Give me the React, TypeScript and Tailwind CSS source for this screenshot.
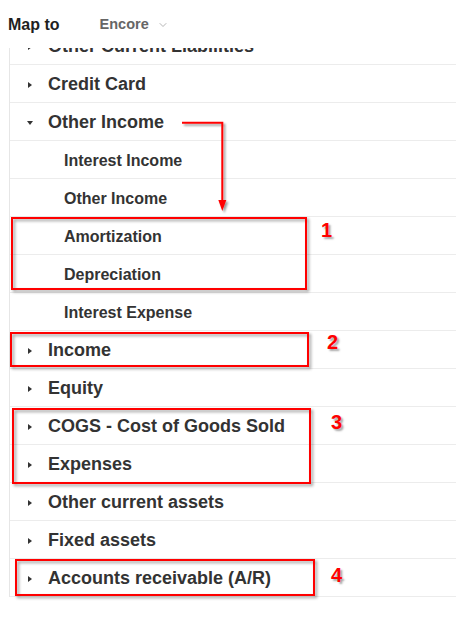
import { ChevronDown } from 'lucide-react';

type Row = { label: string; kind: 'closed' | 'open' | 'child' };

const rows: Row[] = [
  { label: 'Other Current Liabilities', kind: 'closed' },
  { label: 'Credit Card', kind: 'closed' },
  { label: 'Other Income', kind: 'open' },
  { label: 'Interest Income', kind: 'child' },
  { label: 'Other Income', kind: 'child' },
  { label: 'Amortization', kind: 'child' },
  { label: 'Depreciation', kind: 'child' },
  { label: 'Interest Expense', kind: 'child' },
  { label: 'Income', kind: 'closed' },
  { label: 'Equity', kind: 'closed' },
  { label: 'COGS - Cost of Goods Sold', kind: 'closed' },
  { label: 'Expenses', kind: 'closed' },
  { label: 'Other current assets', kind: 'closed' },
  { label: 'Fixed assets', kind: 'closed' },
  { label: 'Accounts receivable (A/R)', kind: 'closed' },
];

const AccountRow = ({ row }: { row: Row }) => {
  if (row.kind === 'child') {
    return (
      <div className="flex h-[38px] items-center border-b border-[#ececec] pt-[2px] pl-[54px]">
        <span className="text-[16px] font-bold text-[#333]">{row.label}</span>
      </div>
    );
  }
  return (
    <div className="flex h-[38px] items-center border-b border-[#ececec] pt-[2px] pl-[16px]">
      <span className="mr-[14px] flex w-[8px] justify-center">
        {row.kind === 'open' ? (
          <span className="h-0 w-0 border-x-[3px] border-t-[4px] border-x-transparent border-t-[#333]" />
        ) : (
          <span className="h-0 w-0 border-y-[3px] border-l-[4px] border-y-transparent border-l-[#333]" />
        )}
      </span>
      <span className="text-[18px] font-bold text-[#333]">{row.label}</span>
    </div>
  );
};

// red annotation box drawn over the list
const Callout = ({ className }: { className: string }) => (
  <div
    className={`pointer-events-none absolute border-2 border-[#ff0000] drop-shadow-[2px_2px_1.5px_rgba(0,0,0,0.4)] ${className}`}
  />
);

const Num = ({ n, className }: { n: string; className: string }) => (
  <span
    className={`pointer-events-none absolute text-[20px] leading-none font-bold text-[#ff0000] [text-shadow:2px_2px_2px_rgba(0,0,0,0.35)] ${className}`}
  >
    {n}
  </span>
);

export default function App() {
  return (
    <div className="relative h-[622px] w-[456px] overflow-hidden bg-white font-['Liberation_Sans',Arial,sans-serif]">
      <div className="flex h-12 items-center pt-[2px] pl-2">
        <span className="text-[16px] font-bold text-[#1f1f1f]">Map to</span>
        <span className="ml-[40px] text-[14.5px] font-bold text-[#666]">Encore</span>
        <ChevronDown className="ml-[8px] h-[12px] w-[12px] text-[#888]" strokeWidth={1.25} />
      </div>

      <div className="h-[574px] overflow-hidden">
        <div className="ml-[9px] mt-[-21px] border-l border-[#e6e6e6]">
          {rows.map((row, i) => (
            <AccountRow key={i} row={row} />
          ))}
        </div>
      </div>

      {/* annotations */}
      <svg className="pointer-events-none absolute inset-0" width="456" height="622">
        <defs>
          <filter id="sh" x="-20%" y="-20%" width="140%" height="140%">
            <feDropShadow dx="2" dy="2" stdDeviation="1.2" floodColor="#000" floodOpacity="0.4" />
          </filter>
        </defs>
        <g filter="url(#sh)">
          <path d="M182 122.7 H222.3 V202" fill="none" stroke="#ff0000" strokeWidth="2" />
          <polygon points="218.3,200 226.3,200 222.3,211" fill="#ff0000" />
        </g>
      </svg>

      <Callout className="left-[11px] top-[217px] h-[73px] w-[296px]" />
      <Callout className="left-[10px] top-[332px] h-[35px] w-[299px]" />
      <Callout className="left-[12px] top-[408px] h-[76px] w-[299px]" />
      <Callout className="left-[15px] top-[559px] h-[37px] w-[300px]" />

      <Num n="1" className="left-[321px] top-[220px]" />
      <Num n="2" className="left-[327px] top-[332px]" />
      <Num n="3" className="left-[331px] top-[412px]" />
      <Num n="4" className="left-[331px] top-[565px]" />
    </div>
  );
}
